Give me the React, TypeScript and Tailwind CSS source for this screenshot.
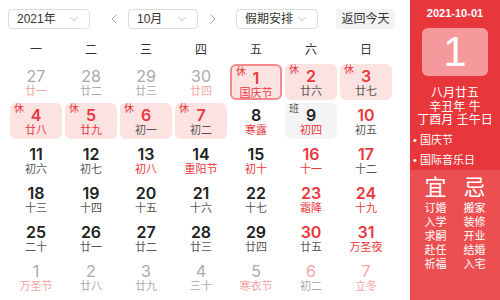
import { ChevronDown, ChevronLeft, ChevronRight } from "lucide-react";

type Day = {
  d: string;
  l: string;
  dc: string;
  lc: string;
  tag?: string;
  box?: "rest" | "today" | "work";
};

const RED = "text-[#e8383d]";
const BLK = "text-[#222]";
const DK = "text-[#555]";
const GR = "text-[#aaa]";
const PK = "text-[#f5a3a5]";

const days: Day[] = [
  { d: "27", l: "廿一", dc: GR, lc: PK },
  { d: "28", l: "廿二", dc: GR, lc: GR },
  { d: "29", l: "廿三", dc: GR, lc: GR },
  { d: "30", l: "廿四", dc: GR, lc: PK },
  { d: "1", l: "国庆节", dc: RED, lc: RED, tag: "休", box: "today" },
  { d: "2", l: "廿六", dc: RED, lc: DK, tag: "休", box: "rest" },
  { d: "3", l: "廿七", dc: RED, lc: DK, tag: "休", box: "rest" },
  { d: "4", l: "廿八", dc: RED, lc: RED, tag: "休", box: "rest" },
  { d: "5", l: "廿九", dc: RED, lc: RED, tag: "休", box: "rest" },
  { d: "6", l: "初一", dc: RED, lc: DK, tag: "休", box: "rest" },
  { d: "7", l: "初二", dc: RED, lc: DK, tag: "休", box: "rest" },
  { d: "8", l: "寒露", dc: BLK, lc: RED },
  { d: "9", l: "初四", dc: BLK, lc: RED, tag: "班", box: "work" },
  { d: "10", l: "初五", dc: RED, lc: DK },
  { d: "11", l: "初六", dc: BLK, lc: DK },
  { d: "12", l: "初七", dc: BLK, lc: DK },
  { d: "13", l: "初八", dc: BLK, lc: RED },
  { d: "14", l: "重阳节", dc: BLK, lc: RED },
  { d: "15", l: "初十", dc: BLK, lc: RED },
  { d: "16", l: "十一", dc: RED, lc: RED },
  { d: "17", l: "十二", dc: RED, lc: DK },
  { d: "18", l: "十三", dc: BLK, lc: DK },
  { d: "19", l: "十四", dc: BLK, lc: DK },
  { d: "20", l: "十五", dc: BLK, lc: DK },
  { d: "21", l: "十六", dc: BLK, lc: DK },
  { d: "22", l: "十七", dc: BLK, lc: DK },
  { d: "23", l: "霜降", dc: RED, lc: RED },
  { d: "24", l: "十九", dc: RED, lc: RED },
  { d: "25", l: "二十", dc: BLK, lc: DK },
  { d: "26", l: "廿一", dc: BLK, lc: DK },
  { d: "27", l: "廿二", dc: BLK, lc: DK },
  { d: "28", l: "廿三", dc: BLK, lc: DK },
  { d: "29", l: "廿四", dc: BLK, lc: DK },
  { d: "30", l: "廿五", dc: RED, lc: DK },
  { d: "31", l: "万圣夜", dc: RED, lc: RED },
  { d: "1", l: "万圣节", dc: GR, lc: PK },
  { d: "2", l: "廿八", dc: GR, lc: GR },
  { d: "3", l: "廿九", dc: GR, lc: GR },
  { d: "4", l: "三十", dc: GR, lc: GR },
  { d: "5", l: "寒衣节", dc: GR, lc: PK },
  { d: "6", l: "初二", dc: PK, lc: GR },
  { d: "7", l: "立冬", dc: PK, lc: PK },
];

const boxCls = {
  rest: "bg-[#fde2e2] rounded-md",
  today: "bg-[#fde2e2] rounded-md border-2 border-[#f08a8c]",
  work: "bg-[#f4f4f5] rounded-md",
};

function Select({ label, w }: { label: string; w: string }) {
  return (
    <div
      className={`${w} h-[20px] flex items-center justify-between pl-2 pr-2 border border-[#ddd] rounded text-[12px] text-[#333]`}
    >
      <span>{label}</span>
      <ChevronDown size={14} strokeWidth={1.25} className="text-[#aaa]" />
    </div>
  );
}

function Cell({ day }: { day: Day }) {
  const faded = day.dc === GR || day.dc === PK;
  return (
    <div
      className={`relative h-[36px] flex flex-col items-center ${day.box ? boxCls[day.box] : ""}`}
    >
      {day.tag && (
        <span
          className={`absolute left-[4px] top-[1px] text-[10px] leading-none ${day.tag === "班" ? "text-[#555]" : RED}`}
        >
          {day.tag}
        </span>
      )}
      <span
        className={`text-[16px] leading-[18px] mt-[3px] font-[Inter,sans-serif] ${faded ? "font-normal" : "font-semibold"} ${day.dc}`}
      >
        {day.d}
      </span>
      <span className={`text-[11px] leading-[13px] ${day.lc}`}>{day.l}</span>
    </div>
  );
}

export default function App() {
  const weeks = ["一", "二", "三", "四", "五", "六", "日"];
  const yi = ["订婚", "入学", "求嗣", "赴任", "祈福"];
  const ji = ["搬家", "装修", "开业", "结婚", "入宅"];

  return (
    <div
      className="w-[500px] h-[300px] flex bg-white overflow-hidden"
      style={{ fontFamily: '"Liberation Sans", "Noto Sans CJK SC", sans-serif' }}
    >
      {/* Left: calendar */}
      <div className="w-[410px] flex flex-col">
        <div className="flex items-center h-[20px] mt-[9px] pl-[8px]">
          <Select label="2021年" w="w-[82px]" />
          <ChevronLeft size={16} strokeWidth={1.25} className="text-[#999] ml-[16px]" />
          <div className="ml-[6px]">
            <Select label="10月" w="w-[70px]" />
          </div>
          <ChevronRight size={16} strokeWidth={1.25} className="text-[#999] ml-[7px]" />
          <div className="ml-[15px]">
            <Select label="假期安排" w="w-[82px]" />
          </div>
          <div className="ml-[18px] w-[59px] h-[20px] rounded bg-[#f3f3f4] text-[12px] text-[#333] flex items-center justify-center">
            返回今天
          </div>
        </div>

        <div className="grid grid-cols-[repeat(7,52px)] gap-x-[3px] pl-[10px] mt-[12px] h-[16px] items-center">
          {weeks.map((w) => (
            <div key={w} className="text-center text-[12px] text-[#333]">
              {w}
            </div>
          ))}
        </div>

        <div className="grid grid-cols-[repeat(7,52px)] gap-x-[3px] gap-y-[3px] pl-[10px] mt-[7px]">
          {days.map((d, i) => (
            <Cell key={i} day={d} />
          ))}
        </div>
      </div>

      {/* Right: day detail */}
      <div className="w-[90px] flex flex-col text-white">
        <div className="bg-[#e8373b] h-[170px] flex flex-col items-center">
          <div className="text-[11px] font-bold mt-[6px] leading-[14px]">2021-10-01</div>
          <div className="mt-[8px] w-[66px] h-[48px] rounded-md bg-[#f49a9c] flex items-center justify-center text-[42px] leading-none">
            1
          </div>
          <div className="mt-[11px] text-[12px] leading-[13.5px] text-center">
            <div>八月廿五</div>
            <div>辛丑年 牛</div>
            <div>丁酉月 壬午日</div>
          </div>
          <div className="self-start pl-[3px] mt-[2px] text-[11px] leading-[20px]">
            <div>• 国庆节</div>
            <div>• 国际音乐日</div>
          </div>
        </div>
        <div className="bg-[#ec4f52] flex-1 flex justify-around px-[6px] pt-[5px]">
          <div className="flex flex-col items-center">
            <div className="text-[22px] leading-[26px]">宜</div>
            <div className="text-[11px] leading-[14px] text-center">
              {yi.map((t) => (
                <div key={t}>{t}</div>
              ))}
            </div>
          </div>
          <div className="flex flex-col items-center">
            <div className="text-[22px] leading-[26px]">忌</div>
            <div className="text-[11px] leading-[14px] text-center">
              {ji.map((t) => (
                <div key={t}>{t}</div>
              ))}
            </div>
          </div>
        </div>
      </div>
    </div>
  );
}
